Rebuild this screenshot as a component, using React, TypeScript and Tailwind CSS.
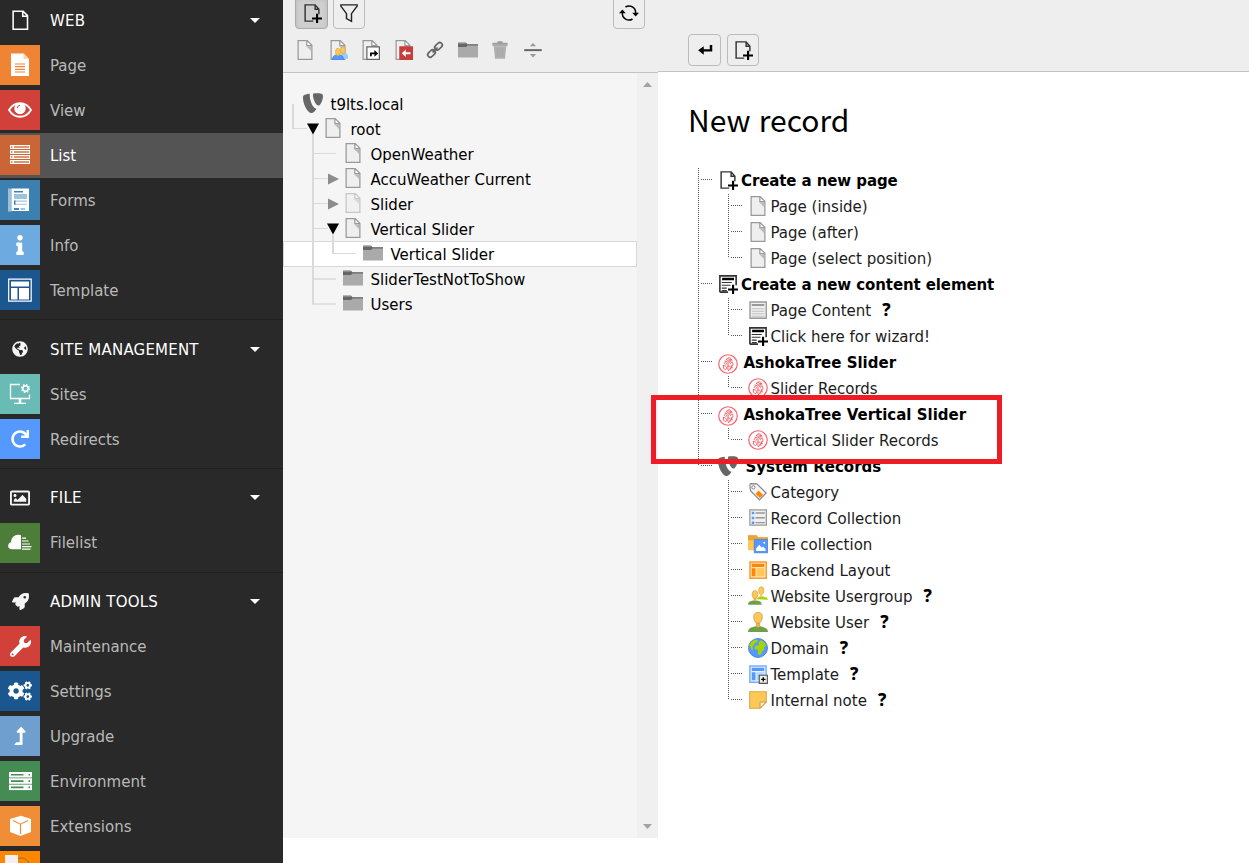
import React from "react";
import { FaCogs, FaGlobeAmericas, FaInfo, FaLevelUpAlt, FaRedo, FaRegImage, FaRocket, FaWrench } from "react-icons/fa";

type P = { className?: string };
type IconC = (p: P) => React.ReactElement;

const svg = (children: React.ReactNode, vb = "0 0 16 16"): IconC =>
  ({ className = "size-5" }) => (
    <svg viewBox={vb} className={className + " shrink-0"} fill="none">{children}</svg>
  );

/* ---------- record and toolbar icons (16 unit grid) ---------- */

const pageShape = (
  <>
    <path d="M2 0h8l4 4v12H2z" fill="#999" />
    <path d="M3 1h6v4h4v10H3z" fill="#efefef" />
    <path d="M9 5l4 4V5z" fill="#bbb" />
    <path d="M10 1.400V4h2.600z" fill="#fff" />
  </>
);
const PageIcon = svg(pageShape);
const PageLight: IconC = () => <span className="opacity-50"><PageIcon /></span>;
const PageUsers = svg(
  <>
    {pageShape}
    <path d="M10 13c0-2 1-3 2-3.300h1c1.500 0 3 1.500 3 3.500V15h-6z" fill="#9bcdf5" />
    <ellipse cx="12" cy="8" rx="1.900" ry="2.700" fill="#ffc857" stroke="#d99f3c" strokeWidth=".5" />
    <path d="M3.500 16c0-2.500 1-3.500 3-4h3c2 .5 3 1.500 3 4z" fill="#59f" stroke="#3875d8" strokeWidth=".5" />
    <ellipse cx="8" cy="9.500" rx="2" ry="3" fill="#ffc857" stroke="#d99f3c" strokeWidth=".5" />
  </>
);
const PageShortcut = svg(
  <>
    {pageShape}
    <path d="M5.500 5.500h10v10h-10z" fill="#fff" stroke="#666" />
    <path d="M8 13v-3h3.500V8l3 2.700-3 2.700v-2H9.400V13z" fill="#000" />
  </>
);
const PageMount = svg(
  <>
    {pageShape}
    <path d="M5 5h11v11H5z" fill="#c83c3c" />
    <path d="M7 10.500l3.200-3v2.200H14v1.600h-3.800v2.200z" fill="#fff" />
  </>
);
const LinkIcon = svg(
  <g stroke="#666" strokeWidth="1.400" fill="none">
    <rect x="-3.400" y="-2" width="6.800" height="4" rx="2" transform="translate(10.800 5) rotate(-45)" />
    <rect x="-3.400" y="-2" width="6.800" height="4" rx="2" transform="translate(5.200 10.800) rotate(-45)" />
    <path d="M6 10l4-4" />
  </g>
);
const FolderIcon = svg(
  <>
    <path d="M0 3.500V2.400h6.500l1 1.200H16V14H0z" fill="#aaa" />
    <path d="M0 2.200h6.500l1 1.200H16v1H7.500L6.500 5.600H0z" fill="#666" />
    <path d="M0 2h6.300l.6.900H0z" fill="#999" />
  </>
);
const TrashIcon = svg(
  <>
    <path d="M6 1h4v1.200h4V4H2V2.200h4z" fill="#999" />
    <path d="M3 5h10l-1 10H4z" fill="#b0b0b0" />
    <path d="M2 3h12v2H2z" fill="#aaa" />
    <path d="M6 6v7.500M8 6v7.500M10 6v7.500" stroke="#a2a2a2" strokeWidth=".6" />
  </>
);
const DividerIcon = svg(
  <>
    <path d="M1 7.300h14v1.600H1z" fill="#666" />
    <path d="M5.500 5L8 2.300 10.500 5zM5.500 11.200L8 14l2.500-2.800z" fill="#999" />
  </>
);
const PageNew = svg(
  <>
    <path d="M2.500 15V1.500h8L13.500 5v4M2.500 14.500H9M10.500 1.500V5h3" stroke="#333" strokeWidth="1.150" />
    <path d="M11.200 8.500h1.700v3H16v1.700h-3.100V16h-1.700v-2.800H8v-1.700h3.200z" fill="#000" />
  </>
);
const ContentNew = svg(
  <>
    <path d="M1.500 14.500v-13h13V9M1.500 14.500H8" stroke="#333" strokeWidth="1.300" />
    <path d="M3.300 3h9.500v2H3.300z" fill="#000" />
    <path d="M3 6.800h8M3 9h7M3 11.300h4M3 13.300h4" stroke="#333" strokeWidth=".9" />
    <path d="M11.200 8.500h1.700v3H16v1.700h-3.100V16h-1.700v-2.800H8v-1.700h3.200z" fill="#000" />
  </>
);
const ContentIcon = svg(
  <>
    <path d="M1.600 1.600h13v13h-13z" fill="#efefef" stroke="#999" strokeWidth="1.100" />
    <path d="M3 3.200h10v1.600H3z" fill="#999" />
    <path d="M3 7h10M3 9h10M3 11h10M3 13h10" stroke="#b9b9b9" strokeWidth=".7" />
  </>
);
const FilterIcon = svg(<path d="M1.500 1.500h13v1L10 8.500v6.200l-4-2.300V8.500l-4.500-6z" stroke="#222" strokeWidth="1.150" />);
const RefreshIcon = svg(
  <>
    <path d="M5.200 3.200A5.300 5.300 0 0 1 13.300 8M10.800 12.800A5.300 5.300 0 0 1 2.700 8" stroke="#000" strokeWidth="1.200" />
    <path d="M10.600 7.800H16l-2.700 3zM0 8.200h5.400L2.700 5.200z" fill="#000" />
  </>
);
const ReturnIcon = svg(<path d="M11.800 4h2v5.200H7v2.500L2.500 8.200 7 4.900v2.400h4.800z" fill="#000" />);
const TypoLogo = svg(
  <>
    <path d="M5.400.6C2.900.9 1 1.400.3 2.100c-.4.400-.3 1.600-.3 2 0 4.400 3.700 12 6.800 12 1 0 2.600-1.300 4-3.600C7.500 12.500 5.400 5 5.400 2z" fill="#666" />
    <path d="M8.300.4c3-.3 6.600-.2 7.400.8.900 1.900-.7 7.500-2.700 8.700C10.600 11 8 4.600 8 2.200c0-1.100 0-1.500.3-1.800z" fill="#666" />
  </>
);
const Ashoka = svg(
  <>
    <circle cx="8" cy="8" r="7.400" stroke="#f4646c" strokeWidth=".95" />
    <g stroke="#f25660" strokeWidth=".75" strokeLinecap="round">
      <path d="M8.300 13.200c-.5-1-.6-2-.3-3.200M8.300 13.200c1.400-.5 2.700-2.200 2.800-4.200M8 10c-.5-1-.2-2 .8-2.600" />
      <path d="M4.300 9.300c-.5 1.600.3 3 1.900 3.100 1-.4 1-1.600.3-2.300-.6-.7-1.300-.9-2.200-.8z" />
      <path d="M5 7.600c.3-1 1-1.600 2-1.600M6.300 8.400c.2-.7.7-1.200 1.400-1.300M8.600 9.300c.3 1.300 1.500 1.600 2.400.8 1-.8 1.200-2.400.6-3.600-.9 0-1.500.5-1.700 1.400" />
      <path d="M6.600 4.600c.3-1.100 1.300-1.700 2.500-1.500 1.300.2 2.100 1.300 2 2.500M7.200 4.700l1.300.9M8.500 3.800l.9 1.300M10 4.200l-.3 1.600M8.200 6.300l1.600.2M5.600 5.600l.8.400M10.800 10.600l.8.400M9.500 11.800l.9.200" />
    </g>
  </>
);
const CategoryIcon = svg(
  <>
    <path d="M1.500 2.500c0-.7.400-1.200 1-1.200l4.600.2 7.400 7.300-5.300 5.500L2 7z" fill="#f4f4f4" stroke="#888" strokeWidth=".95" />
    <circle cx="4.300" cy="4.300" r="1.300" fill="#fff" stroke="#888" strokeWidth=".8" />
    <path d="M8.500 6.800l3.600 3.500-2.700 2.500-3.400-3.500z" fill="#ff8700" />
  </>
);
const RecordsIcon = svg(
  <>
    <path d="M1.500 1.500h13.200v12.200H1.500z" fill="#efefef" stroke="#999" />
    <path d="M3 3h2v2H3zM3 7h2v2H3zM3 10.800h2v2H3z" fill="#59f" />
    <path d="M6 4h7.500M6 7.800h7.500M6 11.700h7.500" stroke="#999" strokeWidth="1.100" />
  </>
);
const FileCollection = svg(
  <>
    <path d="M0 1h7l1 1.500h8V13H0z" fill="#ffc857" />
    <path d="M0 1h7l1 1.500h8V5H0z" fill="#e8a33d" />
    <path d="M5 4.500h10.800V15H5z" fill="#59f" stroke="#3f7fdc" strokeWidth=".6" />
    <path d="M6.500 13.500v-2L9 8.500l2 2.500 1-1 2 2v1.500z" fill="#fff" />
    <circle cx="13" cy="7" r=".8" fill="#fff" />
  </>
);
const LayoutIcon = svg(
  <>
    <path d="M1.600 1.600h13v13h-13z" fill="#ffe4bd" stroke="#ff9a2a" strokeWidth="1.200" />
    <path d="M3 3h10v2.500H3zM3 6.500h3V13H3z" fill="#ff8700" />
    <path d="M7 6.500h6V13H7z" fill="#ffc857" />
  </>
);
const GroupIcon = svg(
  <>
    <path d="M7 10.500c.5-1.700 2-2 2.800-2.400h1.400c1.500.5 4.600.5 4.800 2.900z" fill="#a5d400" />
    <ellipse cx="10.600" cy="3.600" rx="2.100" ry="3" fill="#ffc857" stroke="#d99f3c" strokeWidth=".5" />
    <path d="M9.600 5.500h1.900v3.300h-1.900z" fill="#ffc857" />
    <path d="M0 15c.2-2.800 2-3 4-3.500h3c2 .5 3.800.7 4 3.500z" fill="#6ea049" />
    <path d="M4.500 9h2.200v3H4.500z" fill="#e9b04c" />
    <ellipse cx="5.600" cy="6.800" rx="2.300" ry="3.200" fill="#ffc857" stroke="#d99f3c" strokeWidth=".5" />
  </>
);
const UserIcon = svg(
  <>
    <path d="M0 16c.2-3.300 2.500-3.500 6-4.600h4c3.500 1.100 5.800 1.300 6 4.600z" fill="#6ea049" />
    <path d="M6.300 8h3.400v3.500L8 12.500l-1.700-1z" fill="#e9b04c" />
    <path d="M4.600 3.500C4.600 1.300 6 .3 8 .3s3.400 1 3.400 3.200C11.400 7 10 9 8 9S4.600 7 4.600 3.500z" fill="#ffc857" stroke="#c99545" strokeWidth=".6" />
  </>
);
const DomainIcon = svg(
  <>
    <circle cx="8" cy="8" r="7.600" fill="#59f" stroke="#4a80c4" strokeWidth=".7" />
    <path d="M1.300 5.500C2 3.300 4 1.500 6.500 1.200l1.500 1-1.200 1.300L5.500 4 4.400 6l-1 1 .8 2.500L2.500 9z" fill="#a5d400" />
    <path d="M8.500 3.500l2-1.700c2 .8 3.500 2.400 4 4.200l-1.700 1.300.2 2-1.700 1.500-.8 2-1.300 1L8 12.500 8 9.600 5 8.500l1-2.300 3-.6z" fill="#a5d400" />
  </>
);
const TemplateRec = svg(
  <>
    <path d="M1.500 1.500h13v13h-13z" fill="#e4f0fd" stroke="#7aaefc" strokeWidth="1.200" />
    <path d="M3 3h10v2.600H3zM3 6.600h3V13H3z" fill="#59f" />
    <path d="M7 6.600h6V13H7z" fill="#b5d6ff" />
    <path d="M9 9h6.500v6.500H9z" fill="#eee" stroke="#555" strokeWidth=".9" />
    <path d="M12.250 10.500v3.500M10.500 12.250H14" stroke="#000" strokeWidth="1.100" />
  </>
);
const NoteIcon = svg(
  <>
    <path d="M1.400 1.400h13.200v8.200l-5 5H1.400z" fill="#ffc857" stroke="#dda747" strokeWidth=".9" />
    <path d="M9.600 14.600v-5h5z" fill="#f6ecd0" stroke="#c89a45" strokeWidth=".8" />
  </>
);

/* ---------- module menu glyphs (40 unit tiles) ---------- */

const tile = (c: React.ReactNode) => svg(c, "0 0 40 40");
const MPage = tile(
  <>
    <path d="M11 8.500h12.500L29 14v17H11z" fill="#fff" />
    <path d="M23.500 8l5.500 6h-5.500z" fill="#fbd5b0" />
    <path d="M15 19h10M15 21.700h10M15 24.400h10M15 27h10" stroke="#ef8435" strokeWidth="1.200" />
  </>
);
const MView = tile(
  <>
    <path d="M9 20c5.500-9 16.500-9 22 0-5.500 9-16.500 9-22 0z" stroke="#fff" strokeWidth="1.900" />
    <circle cx="20" cy="18.500" r="5.700" fill="#fff" />
    <path d="M17.300 18.200c0-1.600 1-2.700 2.600-2.800" stroke="#d2403a" strokeWidth="1" />
  </>
);
const MList = tile(
  <>
    {[10, 15, 20, 25].map((y) => (
      <g key={y}>
        <path d={`M10 ${y}h20v4H10z`} fill="#fff" />
        <path d={`M11 ${y + 1}h1.500v2H11zM14 ${y + 1}h15v2H14z`} fill="#dc9672" />
      </g>
    ))}
  </>
);
const MForms = tile(
  <>
    <path d="M8 8.500v23h3.500v-23z" fill="#9dc0da" />
    <path d="M11.500 8.500H29V31H11.500z" fill="#fff" />
    <path d="M14 11h9v1.500h-9zM14 28h5v2h-5z" fill="#4681b4" />
    <path d="M14 14h13v5H14zM14 20.500h13v1.200H14zM14 23.800h13v1H14zM20.500 28h4.500v2h-4.500z" fill="#a0c3dc" />
    <path d="M14 20.500h1.500v4.300H14z" fill="#4681b4" />
  </>
);
const MTemplate = tile(
  <>
    <path d="M8.700 9.200h22.500v22H8.700z" stroke="#fff" strokeWidth="1.200" />
    <path d="M11 11.500h18v5H11zM11 18h6.500v11.500H11zM19 18h10v11.500H19z" fill="#fff" />
  </>
);
const MSites = tile(
  <>
    <path d="M20 10.500h-9.500v14h19v-4M20 25v4M14 29.300h12" stroke="#fff" strokeWidth="1.300" />
    <path d="M18.700 25h2.600v4h-2.600z" fill="#fff" />
    <circle cx="25.500" cy="14.500" r="2.700" stroke="#fff" strokeWidth="1.500" />
    <circle cx="25.500" cy="14.500" r="4" stroke="#fff" strokeWidth="1.100" strokeDasharray="1.570 1.570" />
  </>
);
const MFilelist = tile(
  <>
    <path d="M21 12.300v14H12c-5 0-5-6-1-7 0-5 4-8 8-7.500z" fill="#fff" />
    <path d="M22 15.200h4M22 18h6.500M22 21h8M22 23.700h9.500M22 26.200h8.500" stroke="#fff" strokeWidth="1.200" />
  </>
);
const MEnv = tile(
  <>
    {[11, 17.300, 23.600].map((y) => (
      <g key={y}>
        <path d={`M9 ${y}h23v5.500H9z`} fill="#fff" />
        <path d={`M11 ${y + 2}h12.500v1.600H11zM28.500 ${y + 2}h1.500v1.600h-1.500z`} fill="#448b54" />
      </g>
    ))}
  </>
);
const MExt = tile(
  <>
    <path d="M21 9.800L31 13v13l-10.500 4L10 26V13z" fill="#fff" />
    <path d="M13 14.500l7.500 3.700 7.500-3.700M20.500 18v10" stroke="#f08e38" strokeWidth="1.200" />
  </>
);
const MExtra = tile(
  <>
    <path d="M5 4h13v13H5z" fill="#f4f0f0" />
    <path d="M18 7.500c5-1.500 9 0 12 6" stroke="#a36b2f" strokeWidth="1" />
  </>
);
const FileGlyph = svg(<path d="M2.500 1h8L14 4.500V15.500H2.500zM10.200 1v4H14" stroke="#fff" strokeWidth="1.250" />);

const fa = (I: React.ComponentType<{ className?: string }>, cls: string): IconC =>
  () => <I className={cls} />;

type Item = [string, string, IconC];
type Group = { title: string; icon: IconC; head: string; items: Item[] };

const groups: Group[] = [
  {
    title: "WEB", icon: () => <FileGlyph className="size-5 -translate-y-px" />, head: "-mt-[3px] h-[46px] pt-px",
    items: [
      ["Page", "bg-[#ef8435]", MPage],
      ["View", "bg-[#d2403a]", MView],
      ["List", "bg-[#c96536]", MList],
      ["Forms", "bg-[#3c80b1]", MForms],
      ["Info", "bg-[#6daae0]", fa(FaInfo, "size-5 text-white")],
      ["Template", "bg-[#1c568f]", MTemplate],
    ],
  },
  {
    title: "SITE MANAGEMENT", icon: fa(FaGlobeAmericas, "size-4 -translate-y-px text-[#f5f5f5]"), head: "h-[46px] pt-px",
    items: [
      ["Sites", "bg-[#6abbb5]", MSites],
      ["Redirects", "bg-[#5599ff]", fa(FaRedo, "size-[18px] text-white")],
    ],
  },
  {
    title: "FILE", icon: fa(FaRegImage, "size-5 text-[#f5f5f5]"), head: "h-[46px] pb-px",
    items: [["Filelist", "bg-[#4c7e3a]", MFilelist]],
  },
  {
    title: "ADMIN TOOLS", icon: fa(FaRocket, "size-[17px] text-[#f5f5f5]"), head: "h-[45px]",
    items: [
      ["Maintenance", "bg-[#d2403a]", fa(FaWrench, "size-[21px] text-white")],
      ["Settings", "bg-[#1c568f]", fa(FaCogs, "size-6 text-white")],
      ["Upgrade", "bg-[#6f9fcf]", fa(FaLevelUpAlt, "size-[18px] text-white")],
      ["Environment", "bg-[#448b54]", MEnv],
      ["Extensions", "bg-[#f08e38]", MExt],
      ["", "bg-[#ff8700]", MExtra],
    ],
  },
];

function Sidebar() {
  return (
    <nav className="flex h-full w-[283px] shrink-0 flex-col overflow-hidden bg-[#292929] text-[15px] text-[#b9b9b9]">
      {groups.map((g, gi) => (
        <section key={g.title} className={gi ? "mt-1.5 shrink-0 border-t border-[#1f1f1f] pt-1.5" : "shrink-0"}>
          <header className={g.head + " flex items-center text-white"}>
            <span className="flex w-10 justify-center"><g.icon /></span>
            <span className="ml-2.5 flex-1 tracking-[0.2px]">{g.title}</span>
            <svg viewBox="0 0 10 5" className="mr-[23px] h-[5px] w-2.5"><path d="M0 0h10L5 5z" fill="#fff" /></svg>
          </header>
          {g.items.map(([label, color, Icon]) => (
            <div key={label} className={"flex h-[45px] pt-0.5 " + (label === "List" ? "bg-[#545454] text-white" : "")}>
              <span className={"flex size-10 shrink-0 items-center justify-center " + color}><Icon className="size-10" /></span>
              <span className={"ml-2.5 flex items-center " + (label === "Filelist" ? "h-[39px]" : "h-[41px]")}>{label}</span>
            </div>
          ))}
        </section>
      ))}
    </nav>
  );
}

type Node = { label: string; pad: string; icon: IconC; arrow?: "open" | "closed"; selected?: boolean };
const nodes: Node[] = [
  { label: "t9lts.local", pad: "pl-1", icon: TypoLogo },
  { label: "root", pad: "pl-6", icon: PageIcon, arrow: "open" },
  { label: "OpenWeather", pad: "pl-11", icon: PageIcon },
  { label: "AccuWeather Current", pad: "pl-11", icon: PageIcon, arrow: "closed" },
  { label: "Slider", pad: "pl-11", icon: PageLight, arrow: "closed" },
  { label: "Vertical Slider", pad: "pl-11", icon: PageIcon, arrow: "open" },
  { label: "Vertical Slider", pad: "pl-16", icon: FolderIcon, selected: true },
  { label: "SliderTestNotToShow", pad: "pl-11", icon: FolderIcon },
  { label: "Users", pad: "pl-11", icon: FolderIcon },
];

function PageTree() {
  return (
    <div className="relative flex-1 bg-[#f5f5f5] pt-[18px]">
      {nodes.map((n, i) => (
        <div
          key={i}
          className={
            "flex h-[25px] items-center text-[15px] text-black " + n.pad +
            (n.selected ? " bg-white shadow-[inset_1px_1px_#d8d8d8,inset_-1px_0_#d8d8d8,0_1px_#d8d8d8]" : "")
          }
        >
          <span className="flex w-4 shrink-0 items-center justify-center">
            <span className="relative z-10 -ml-1 size-3">
              {n.arrow && (
                <svg viewBox="0 0 12 12" className="size-3">
                  {n.arrow === "open" ? <path d="M0 .5h12L6 11.500z" fill="#000" /> : <path d="M1 .5v11l11-5.500z" fill="#8c8c8c" />}
                </svg>
              )}
            </span>
          </span>
          <span className="mt-0.5 flex size-5 shrink-0 self-start"><n.icon /></span>
          <span className="ml-[7.500px] translate-y-px whitespace-nowrap">{n.label}</span>
        </div>
      ))}
      <svg className="absolute left-0 top-0 h-60 w-[354px]" stroke="#dadada">
        <path d="M10 31v24M30 61v170.500M50 162v19" strokeWidth="2" />
        <path d="M9 55.500h15M30 80.500h23M30 105.500h15M30 130.500h15M30 155.500h15M50 180.500h23" />
        <path d="M30 206h23M30 231h23" strokeWidth="1.500" />
      </svg>
    </div>
  );
}

function TreePanel() {
  const tools = [PageIcon, PageUsers, PageShortcut, PageMount, LinkIcon, FolderIcon, TrashIcon, DividerIcon];
  return (
    <aside className="flex h-[838px] w-[375px] shrink-0 flex-col">
      <div className="flex h-[73px] shrink-0 flex-col overflow-hidden border-b border-[#c3c3c3] bg-[#eee] pl-3 pr-[13px]">
        <div className="-mt-1 flex h-[33px] shrink-0">
          <span className="mr-[5px] flex w-[33px] items-center justify-center rounded-b-sm border border-[#aaa] bg-[#cfcfcf] shadow-[inset_0_2px_4px_rgba(0,0,0,0.12)]"><PageNew /></span>
          <span className="flex w-8 items-center justify-center rounded-b-sm border border-[#bbb] bg-[#eee]"><FilterIcon /></span>
          <span className="ml-auto flex w-8 items-center justify-center rounded-b-sm border border-[#bbb] bg-[#eee]"><RefreshIcon /></span>
        </div>
        <div className="mt-[11px] flex gap-[12.500px]">
          {tools.map((T, i) => <T key={i} />)}
        </div>
      </div>
      <div className="flex min-h-0 flex-1">
        <PageTree />
        <div className="flex w-[21px] flex-col items-center justify-between bg-[#f0f0f0] py-[9px]">
          <svg viewBox="0 0 9 5" className="h-[5px] w-[9px]"><path d="M0 5h9L4.500 0z" fill="#a3a3a3" /></svg>
          <svg viewBox="0 0 9 5" className="h-[5px] w-[9px]"><path d="M0 0h9L4.500 5z" fill="#a3a3a3" /></svg>
        </div>
      </div>
    </aside>
  );
}

type Rec = { label: string; icon: IconC; head?: string; help?: boolean; shift?: string };
const recs: Rec[] = [
  { label: "Create a new page", icon: PageNew, head: "ml-[3px] tracking-[-0.1px]" },
  { label: "Page (inside)", icon: PageIcon },
  { label: "Page (after)", icon: PageIcon },
  { label: "Page (select position)", icon: PageIcon },
  { label: "Create a new content element", icon: ContentNew, head: "ml-[3px] tracking-[-0.1px]" },
  { label: "Page Content", icon: ContentIcon, help: true },
  { label: "Click here for wizard!", icon: ContentNew },
  { label: "AshokaTree Slider", icon: Ashoka, head: "ml-[5.500px]", shift: "translate-y-px" },
  { label: "Slider Records", icon: Ashoka },
  { label: "AshokaTree Vertical Slider", icon: Ashoka, head: "ml-[5.500px]", shift: "translate-y-px" },
  { label: "Vertical Slider Records", icon: Ashoka },
  { label: "System Records", icon: TypoLogo, head: "ml-[7.500px]" },
  { label: "Category", icon: CategoryIcon },
  { label: "Record Collection", icon: RecordsIcon },
  { label: "File collection", icon: FileCollection },
  { label: "Backend Layout", icon: LayoutIcon },
  { label: "Website Usergroup", icon: GroupIcon, help: true },
  { label: "Website User", icon: UserIcon, help: true },
  { label: "Domain", icon: DomainIcon, help: true },
  { label: "Template", icon: TemplateRec, help: true },
  { label: "Internal note", icon: NoteIcon, help: true },
];

function RecordTree() {
  const branches = recs
    .map((r, i) => (r.head ? `M3 ${i * 26 + 11.500}h11` : `M33 ${i * 26 + 11.500}h12`))
    .join("");
  return (
    <div className="relative mt-[29px] ml-[10px]">
      <svg className="absolute left-0 top-0 h-[546px] w-[60px]" stroke="#555" strokeDasharray="1 1" fill="none">
        <path d="M.5 0v298M30.500 26v64M30.500 130v38M30.500 208v12M30.500 260v12M30.500 312v220" />
        <path d={branches} />
      </svg>
      {recs.map((r, i) => (
        <div key={i} className={"flex h-[26px] items-center whitespace-nowrap text-[15px] " + (r.head ? "pl-5 font-bold text-black" : "pl-[50px] text-[#1c1c1c]")}>
          <span className={"flex size-5 shrink-0 " + (r.shift ?? "-translate-y-px")}><r.icon /></span>
          <span className={r.head ?? "ml-[2.500px]"}>{r.label}</span>
          {r.help && <span className="ml-[11px] -translate-y-px font-['Noto_Sans'] text-[17px] font-extrabold text-black">?</span>}
        </div>
      ))}
    </div>
  );
}

export default function App() {
  return (
    <div className="relative flex h-[863px] w-[1249px] overflow-hidden bg-white font-['DejaVu_Sans',sans-serif] leading-5">
      <Sidebar />
      <TreePanel />
      <main className="min-w-0 flex-1">
        <div className="flex h-[72px] gap-1.5 border-b border-[#c3c3c3] bg-[#eee] pl-[30px] pt-[34px]">
          <span className="flex h-8 w-[33px] items-center justify-center rounded-sm border border-[#bbb]"><ReturnIcon /></span>
          <span className="flex h-8 w-8 items-center justify-center rounded-sm border border-[#bbb]"><PageNew /></span>
        </div>
        <div className="pl-[30px] pt-[27px]">
          <h1 className="h-10 whitespace-nowrap font-['Noto_Sans_CJK_SC','Noto_Sans_CJK_JP',sans-serif] text-[30px] font-normal leading-10 text-black [word-spacing:1.500px]">New record</h1>
          <RecordTree />
        </div>
      </main>
      <div className="absolute left-[651px] top-[395px] h-[69px] w-[351px] border-[5px] border-[#ee1c25]" />
    </div>
  );
}
